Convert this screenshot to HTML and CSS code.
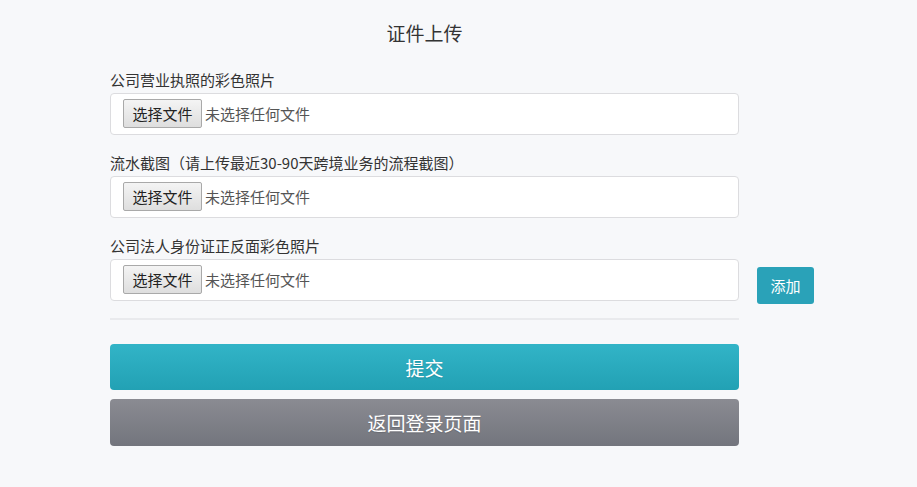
FILE: index.html
```html
<!DOCTYPE html>
<html lang="zh">
<head>
<meta charset="utf-8">
<title>证件上传</title>
<link rel="stylesheet" href="styles.css">
</head>
<body>
<div class="page">
  <div class="form">
    <h1 class="title">证件上传</h1>
    <div class="field">
      <div class="label">公司营业执照的彩色照片</div>
      <div class="row">
        <div class="file-box"><span class="file-btn">选择文件</span><span class="file-text">未选择任何文件</span></div>
      </div>
    </div>
    <div class="field">
      <div class="label">流水截图（请上传最近30-90天跨境业务的流程截图）</div>
      <div class="row">
        <div class="file-box"><span class="file-btn">选择文件</span><span class="file-text">未选择任何文件</span></div>
      </div>
    </div>
    <div class="field field-last">
      <div class="label">公司法人身份证正反面彩色照片</div>
      <div class="row">
        <div class="file-box"><span class="file-btn">选择文件</span><span class="file-text">未选择任何文件</span></div>
        <button class="add-btn">添加</button>
      </div>
    </div>
    <div class="divider"></div>
    <button class="btn btn-submit">提交</button>
    <button class="btn btn-back">返回登录页面</button>
  </div>
</div>
</body>
</html>
```
FILE: styles.css
```css
* { box-sizing: border-box; }
html, body { margin: 0; padding: 0; }
body {
  background: #f7f8fa;
  font-family: "Noto Sans CJK SC", "Noto Sans", sans-serif;
  color: #333;
}
.page {
  padding: 22px 0 0 110px;
}
.form {
  width: 629px;
  display: flex;
  flex-direction: column;
}
.title {
  margin: 0 0 26px;
  font-size: 19px;
  font-weight: normal;
  line-height: 22px;
  text-align: center;
  color: #333;
}
.field {
  display: flex;
  flex-direction: column;
  margin-bottom: 18px;
}
.field-last { margin-bottom: 0; }
.label {
  font-size: 15px;
  line-height: 20px;
  color: #333;
  margin-bottom: 3px;
  white-space: nowrap;
}
.row {
  display: flex;
  align-items: flex-start;
  width: 629px;
}
.file-box {
  flex: 0 0 629px;
  height: 42px;
  background: #fff;
  border: 1px solid #dcdcdf;
  border-radius: 4px;
  display: flex;
  align-items: center;
  padding: 0 0 1px 12px;
}
.file-btn {
  width: 79px;
  height: 29px;
  border: 1px solid #a9a9a9;
  border-radius: 2px;
  background: linear-gradient(#f4f4f4, #dedede);
  font-size: 15px;
  line-height: 27px;
  text-align: center;
  color: #222;
}
.file-text {
  margin-left: 3px;
  font-size: 15px;
  color: #555;
}
.add-btn {
  flex: 0 0 57px;
  height: 37px;
  margin: 8px 0 0 18px;
  border: none;
  border-radius: 3px;
  background: #2aa2b8;
  color: #fff;
  font-family: inherit;
  font-size: 15px;
  padding: 0;
}
.divider {
  height: 2px;
  background: #e9eaed;
  margin: 14px 0 24px;
}
.btn {
  display: block;
  width: 629px;
  border: none;
  border-radius: 4px;
  color: #fff;
  font-family: inherit;
  font-size: 19px;
  padding: 0;
  text-shadow: 0 1px 1px rgba(0,0,0,0.15);
}
.btn-submit {
  height: 46px;
  background: linear-gradient(#32b4c7, #22a1b4);
  margin-bottom: 9px;
}
.btn-back {
  height: 47px;
  background: linear-gradient(#8a8b92, #73757d);
}
```
